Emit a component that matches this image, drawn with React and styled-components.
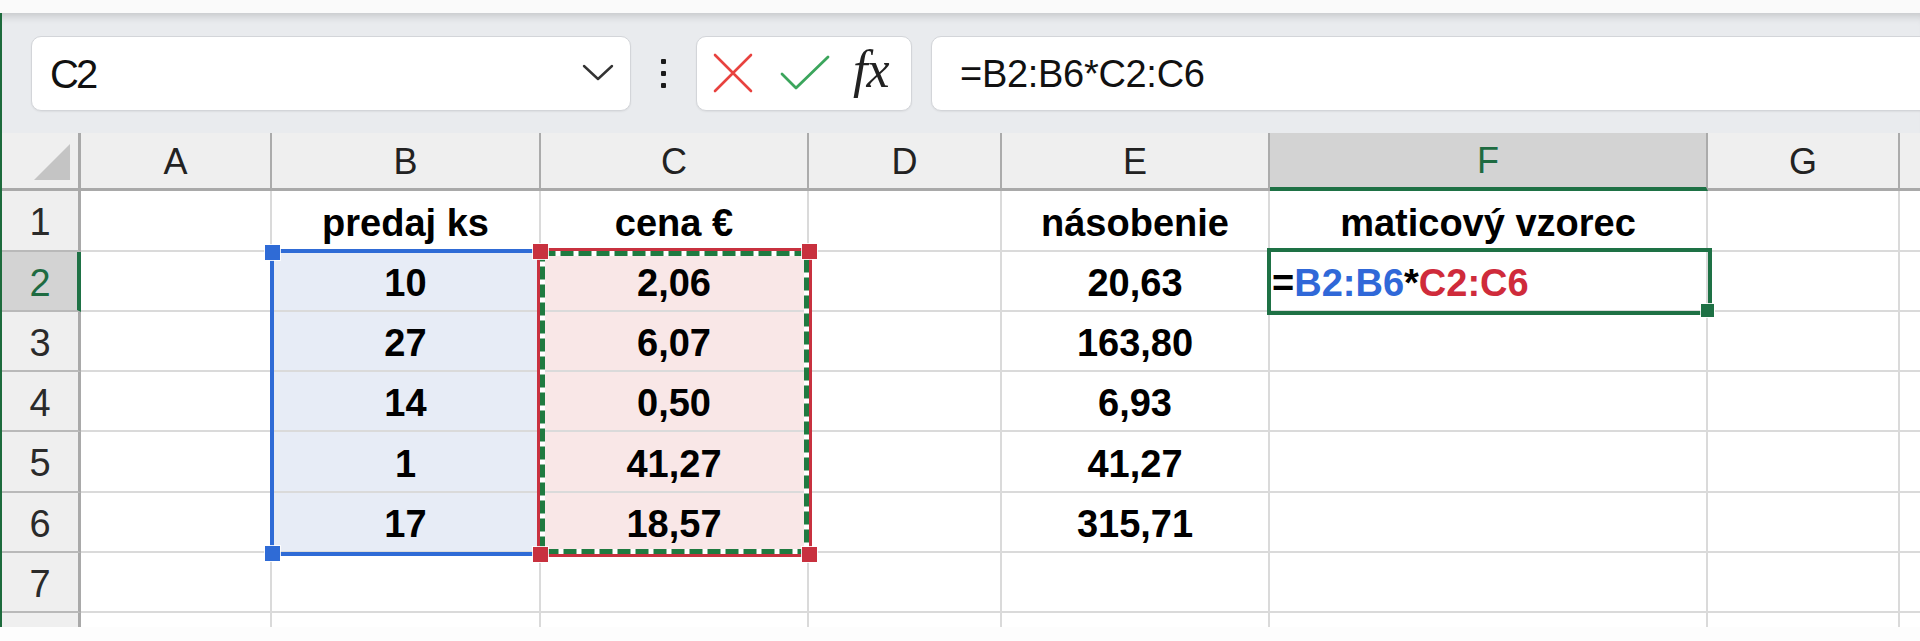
import React from "react";
import styled, { createGlobalStyle } from "styled-components";

const GlobalStyle = createGlobalStyle`
  html, body { margin: 0; padding: 0; background: #ffffff; }
  body { font-family: "Liberation Sans", Arial, sans-serif; }
  * { box-sizing: border-box; }
`;

const GRID_X = 2;
const GRID_Y = 133;
const ROW_HEADER_W = 79;
const HEADER_H = 58;
const COLS = [
  { id: "A", w: 191 },
  { id: "B", w: 269 },
  { id: "C", w: 268 },
  { id: "D", w: 193 },
  { id: "E", w: 268 },
  { id: "F", w: 438 },
  { id: "G", w: 192 },
  { id: "H", w: 300, hidden: true },
];
const ROW_H = [61, 60, 60, 60, 61, 60, 60, 60];
const VISIBLE_ROWS = 7;

const DATA = {
  1: { B: "predaj ks", C: "cena €", E: "násobenie", F: "maticový vzorec" },
  2: { B: "10", C: "2,06", E: "20,63" },
  3: { B: "27", C: "6,07", E: "163,80" },
  4: { B: "14", C: "0,50", E: "6,93" },
  5: { B: "1", C: "41,27", E: "41,27" },
  6: { B: "17", C: "18,57", E: "315,71" },
};

const Page = styled.div`
  width: 1920px;
  height: 641px;
  overflow: hidden;
  display: flex;
  flex-direction: column;
  background: #fdfdfd;
`;

const TopStrip = styled.div`
  height: 13px;
  flex: none;
  background: #fafafa;
`;

const Window = styled.div`
  height: 614px;
  flex: none;
  display: flex;
  flex-direction: column;
  border-left: 2px solid #1d6b3c;
  overflow: hidden;
`;

const BottomStrip = styled.div`
  flex: 1;
  background: #fdfdfd;
`;

const Toolbar = styled.div`
  height: 120px;
  flex: none;
  display: flex;
  align-items: center;
  padding-left: 29px;
  background: #e9ebee;
  box-shadow: inset 0 10px 9px -7px rgba(0, 0, 0, 0.16);
`;

const Box = styled.div`
  height: 75px;
  background: #ffffff;
  border: 1px solid #d3d5d9;
  border-radius: 10px;
  box-shadow: 0 1px 2px rgba(0, 0, 0, 0.06);
  display: flex;
  align-items: center;
`;

const NameBox = styled(Box)`
  width: 600px;
  padding: 0 16px 0 18px;
  justify-content: space-between;
`;

const NameText = styled.span`
  font-family: "Liberation Sans", Arial, sans-serif;
  font-size: 40px;
  color: #111;
  letter-spacing: -3px;
  padding-top: 2px;
`;

const Dots = styled.div`
  margin: 0 30px;
  display: flex;
  flex-direction: column;
  align-items: center;
  gap: 7px;
  width: 5px;
`;

const Dot = styled.span`
  width: 5px;
  height: 5px;
  border-radius: 1px;
  background: #1a1a1a;
`;

const FuncBox = styled(Box)`
  width: 216px;
  padding-left: 16px;
  gap: 27px;
`;

const FxText = styled.span`
  font-family: "Liberation Serif", "Times New Roman", serif;
  font-style: italic;
  font-size: 52px;
  color: #222;
  margin-left: -4px;
  letter-spacing: -1px;
  line-height: 1;
  padding-bottom: 6px;
`;

const FormulaBox = styled(Box)`
  flex: 1;
  margin-left: 19px;
  margin-right: -20px;
  padding-left: 28px;
`;

const FormulaText = styled.span`
  font-family: "Liberation Sans", Arial, sans-serif;
  font-size: 38px;
  color: #111;
  letter-spacing: -0.3px;
  padding-top: 2px;
`;

const Grid = styled.div`
  position: relative;
  flex: 1;
  display: grid;
  grid-template-columns: ${ROW_HEADER_W}px ${COLS.map((c) => c.w + "px").join(" ")};
  grid-template-rows: ${HEADER_H}px ${ROW_H.map((h) => h + "px").join(" ")};
  overflow: hidden;
  background: #ffffff;
`;

const Corner = styled.div`
  background: #efefef;
  border-right: 3px solid #a9a9a9;
  border-bottom: 3px solid #a9a9a9;
  display: flex;
  align-items: flex-end;
  justify-content: flex-end;
  padding: 0 8px 8px 0;
`;

const CornerTriangle = styled.div`
  width: 36px;
  height: 36px;
  background: #c4c4c4;
  clip-path: polygon(100% 0, 100% 100%, 0 100%);
`;

const ColHeader = styled.div`
  background: ${(p) => (p.$active ? "#d3d3d3" : "#efefef")};
  border-right: 2px solid #ababab;
  border-bottom: ${(p) => (p.$active ? "4px solid #1e7145" : "3px solid #a9a9a9")};
  display: flex;
  align-items: center;
  justify-content: center;
  font-size: 36px;
  color: ${(p) => (p.$active ? "#1e6b41" : "#222")};
  padding-top: ${(p) => (p.$active ? "2px" : "3px")};
`;

const RowHeader = styled.div`
  background: ${(p) => (p.$active ? "#d3d3d3" : "#efefef")};
  border-right: ${(p) => (p.$active ? "4px solid #1e7145" : "3px solid #a9a9a9")};
  border-bottom: 2px solid #b9b9b9;
  display: flex;
  align-items: center;
  justify-content: center;
  font-size: 38px;
  color: ${(p) => (p.$active ? "#1e6b41" : "#2a2a2a")};
  padding-top: 4px;
  padding-left: ${(p) => (p.$active ? "1px" : "0")};
`;

const TINTS = { blue: "#e7ecf6", red: "#f9e7e7" };

const Cell = styled.div`
  background: ${(p) => (p.$tint ? TINTS[p.$tint] : "#ffffff")};
  border-right: 2px solid #dadada;
  border-bottom: 2px solid #dadada;
  display: flex;
  align-items: center;
  justify-content: ${(p) => (p.$left ? "flex-start" : "center")};
  padding: 5px 0 0 ${(p) => (p.$left ? "2px" : "0")};
  font-family: "Liberation Sans", Arial, sans-serif;
  font-weight: 700;
  font-size: 38px;
  color: #000;
  white-space: nowrap;
`;

const RefBlue = styled.span`
  color: #3068d8;
`;
const RefRed = styled.span`
  color: #cf2b3b;
`;

const Overlay = styled.div`
  position: absolute;
  left: ${(p) => p.$x - GRID_X}px;
  top: ${(p) => p.$y - GRID_Y}px;
  width: ${(p) => p.$w}px;
  height: ${(p) => p.$h}px;
  pointer-events: none;
`;

const RangeBorder = styled(Overlay)`
  border: ${(p) => p.$bw || 4}px solid ${(p) => p.$color};
`;

const Handle = styled(Overlay)`
  background: ${(p) => p.$color};
  box-shadow: 0 0 0 1px rgba(255, 255, 255, 0.85);
`;

const Marquee = styled.svg`
  position: absolute;
  left: ${(p) => p.$x - GRID_X}px;
  top: ${(p) => p.$y - GRID_Y}px;
  overflow: visible;
`;

function CancelIcon() {
  return (
    <svg width="40" height="40" viewBox="0 0 40 40">
      <path d="M2 2 L38 38 M38 2 L2 38" stroke="#e8423f" strokeWidth="2.6" fill="none" strokeLinecap="round" />
    </svg>
  );
}

function EnterIcon() {
  return (
    <svg width="50" height="36" viewBox="0 0 50 36">
      <path d="M2 19 L16 33 L48 2" stroke="#3ba55c" strokeWidth="2.8" fill="none" strokeLinecap="round" strokeLinejoin="round" />
    </svg>
  );
}

function Chevron() {
  return (
    <svg width="32" height="18" viewBox="0 0 32 18">
      <path d="M2 2 L16 15 L30 2" stroke="#333" strokeWidth="2.4" fill="none" strokeLinecap="round" strokeLinejoin="round" />
    </svg>
  );
}

function renderF2() {
  return (
    <>
      =<RefBlue>B2:B6</RefBlue>*<RefRed>C2:C6</RefRed>
    </>
  );
}

export default function App() {
  const rows = ROW_H.map((_, i) => i + 1);
  return (
    <>
      <GlobalStyle />
      <Page>
        <TopStrip />
        <Window>
          <Toolbar>
            <NameBox>
              <NameText>C2</NameText>
              <Chevron />
            </NameBox>
            <Dots>
              <Dot />
              <Dot />
              <Dot />
            </Dots>
            <FuncBox>
              <CancelIcon />
              <EnterIcon />
              <FxText>fx</FxText>
            </FuncBox>
            <FormulaBox>
              <FormulaText>=B2:B6*C2:C6</FormulaText>
            </FormulaBox>
          </Toolbar>
          <Grid>
            <Corner>
              <CornerTriangle />
            </Corner>
            {COLS.map((c) => (
              <ColHeader key={c.id} $active={c.id === "F"}>
                {c.hidden ? "" : c.id}
              </ColHeader>
            ))}
            {rows.map((r) => (
              <React.Fragment key={r}>
                <RowHeader $active={r === 2}>{r <= VISIBLE_ROWS ? r : ""}</RowHeader>
                {COLS.map((c) => {
                  const inB = c.id === "B" && r >= 2 && r <= 6;
                  const inC = c.id === "C" && r >= 2 && r <= 6;
                  const isF2 = c.id === "F" && r === 2;
                  return (
                    <Cell
                      key={c.id}
                      $tint={inB ? "blue" : inC ? "red" : undefined}
                      $left={isF2}
                    >
                      {isF2 ? renderF2() : (DATA[r] && DATA[r][c.id]) || ""}
                    </Cell>
                  );
                })}
              </React.Fragment>
            ))}

            {/* B2:B6 reference range */}
            <RangeBorder $x={270} $y={249} $w={273} $h={307} $color="#2f6bd6" />
            {/* C2:C6 reference range with copy marquee */}
            <RangeBorder $x={537} $y={248} $w={275} $h={309} $bw={3} $color="#c8313f" />
            <Marquee $x={540} $y={251} width="269" height="303">
              <rect x="2.5" y="2.5" width="264" height="298" fill="none" stroke="#ffffff" strokeWidth="5" />
              <rect x="2.5" y="2.5" width="264" height="298" fill="none" stroke="#1f7a40" strokeWidth="5" strokeDasharray="13 5" />
            </Marquee>
            <Handle $x={265} $y={245} $w={15} $h={15} $color="#2f6bd6" />
            <Handle $x={265} $y={546} $w={15} $h={15} $color="#2f6bd6" />
            <Handle $x={533} $y={244} $w={15} $h={15} $color="#c8313f" />
            <Handle $x={802} $y={244} $w={15} $h={15} $color="#c8313f" />
            <Handle $x={533} $y={547} $w={15} $h={15} $color="#c8313f" />
            <Handle $x={802} $y={547} $w={15} $h={15} $color="#c8313f" />

            {/* active cell F2 */}
            <RangeBorder $x={1267} $y={248} $w={445} $h={67} $color="#1e7145" />
            <Handle $x={1701} $y={304} $w={13} $h={13} $color="#1e7145" />
          </Grid>
        </Window>
        <BottomStrip />
      </Page>
    </>
  );
}
